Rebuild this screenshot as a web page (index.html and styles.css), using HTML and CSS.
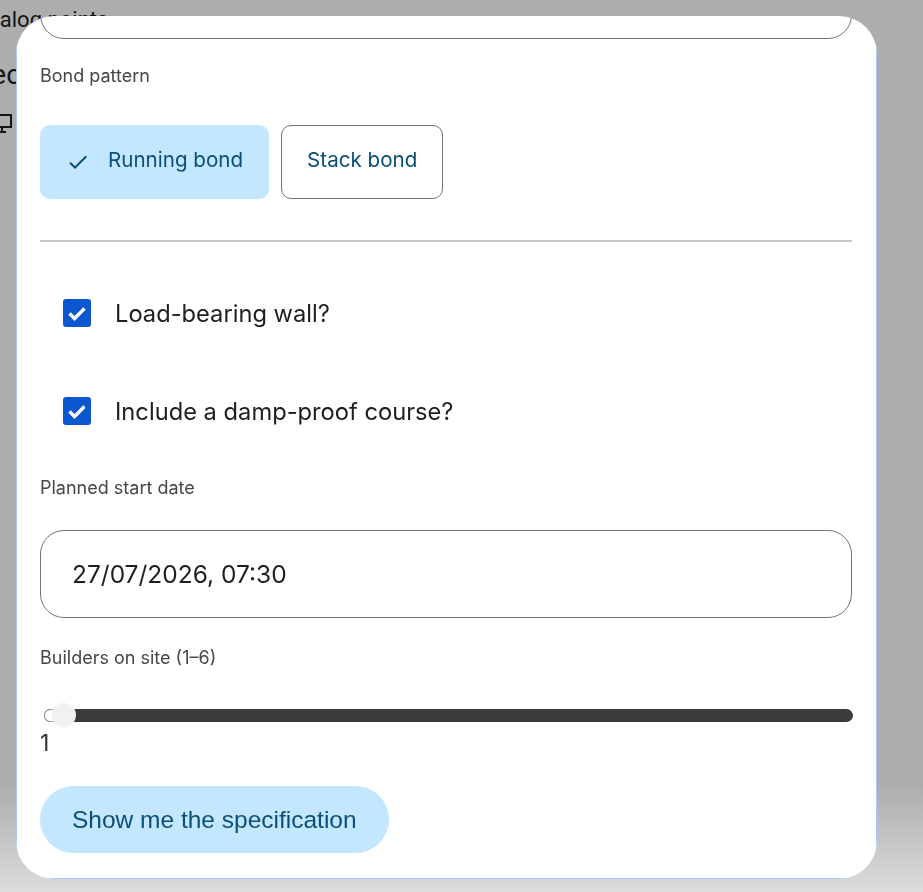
FILE: index.html
```html
<!DOCTYPE html>
<html lang="en">
<head>
<meta charset="utf-8">
<title>Wall specification</title>
<link rel="stylesheet" href="styles.css">
</head>
<body>
  <main class="page" aria-hidden="true">
    <p class="page-title">Dialog points</p>
    <h1 class="page-heading">Select</h1>
    <svg class="page-icon" width="24" height="24" viewBox="0 0 24 24">
      <path d="M3 4h18v12H3z M8 21h8 M12 16v5" fill="none" stroke="currentColor" stroke-width="2"/>
    </svg>
  </main>

  <div class="dialog" role="dialog" aria-label="Wall specification">
    <form class="sheet">
      <div class="field field-top"></div>

      <div class="label label-bond">Bond pattern</div>
      <div class="chips">
        <button type="button" class="chip chip-on">
          <svg class="chip-check" width="24" height="24" viewBox="0 0 24 24"><path d="M9 16.17 4.83 12l-1.42 1.41L9 19 21 7l-1.41-1.41z"/></svg>
          Running bond
        </button>
        <button type="button" class="chip">Stack bond</button>
      </div>

      <div class="rule"></div>

      <label class="check">
        <span class="box"><svg width="28" height="28" viewBox="0 0 28 28"><path d="M6.5 14.5l5 5L21.5 9.5" fill="none" stroke="#fff" stroke-width="3.4"/></svg></span>
        Load-bearing wall?
      </label>
      <label class="check check-next">
        <span class="box"><svg width="28" height="28" viewBox="0 0 28 28"><path d="M6.5 14.5l5 5L21.5 9.5" fill="none" stroke="#fff" stroke-width="3.4"/></svg></span>
        Include a damp-proof course?
      </label>

      <div class="label label-date">Planned start date</div>
      <div class="field field-date">27/07/2026, 07:30</div>

      <div class="label label-crew">Builders on site (1–6)</div>
      <div class="slider" role="slider" aria-valuemin="1" aria-valuemax="6" aria-valuenow="1">
        <div class="track"><span class="thumb"></span></div>
      </div>
      <div class="slider-value">1</div>

      <button type="button" class="submit">Show me the specification</button>
    </form>
  </div>
</body>
</html>
```

FILE: styles.css
```css
html, body {
  margin: 0;
  height: 100%;
}

body {
  overflow: hidden;
  background: linear-gradient(to bottom, #adadad 0, #adadad 785px, #dcdcdc 892px);
  font-family: Inter, "Noto Sans", sans-serif;
}

/* page underneath the modal, scrolled a little to the right */
.page {
  margin-left: -20px;
  padding-top: 6px;
  color: #141414;
  font-family: Roboto, "Liberation Sans", sans-serif;
}

.page-title {
  margin: 0;
  font-size: 22px;
  line-height: 28px;
  white-space: nowrap;
}

.page-heading {
  margin: 23px 0 0 -27px;
  font-size: 28px;
  font-weight: 400;
  line-height: 36px;
  white-space: nowrap;
}

.page-icon {
  display: block;
  margin: 18px 0 0 10px;
}

/* modal */
.dialog {
  position: fixed;
  left: 16px;
  top: 16px;
  width: 861px;
  height: 863px;
  border-radius: 38px;
  overflow: hidden;
  background: #fff;
}

.sheet {
  box-sizing: border-box;
  height: 100%;
  margin: 0;
  border: 1px solid #a8c7fa;
  border-top: 0;
  padding: 0 24px 0 23px;
  display: flex;
  flex-direction: column;
}

.field {
  box-sizing: border-box;
  height: 88px;
  flex: none;
  border: 1px solid #747775;
  border-radius: 24px;
  display: flex;
  align-items: center;
  padding-left: 31px;
  font-size: 24.5px;
  color: #1f1f1f;
}

.field-top { margin-top: -65px; }

.label {
  font-size: 18px;
  line-height: 24px;
  color: #444746;
}

.label-bond { margin-top: 25px; }
.label-date { margin-top: 41px; }
.label-crew { margin-top: 28px; }
.field-date { margin-top: 30px; }

.chips {
  display: flex;
  gap: 12px;
  margin-top: 37px;
}

.chip {
  box-sizing: border-box;
  height: 74px;
  border: 1px solid #747775;
  border-radius: 10px;
  padding: 0 25px 5px;
  background: #fff;
  display: flex;
  align-items: center;
  gap: 18px;
  font-family: Inter, "Noto Sans", sans-serif;
  font-size: 20.6px;
  color: #0b4f78;
}

.chip-on {
  background: #c2e7ff;
  border-color: #c2e7ff;
}

.chip-check {
  fill: #0b4f78;
  margin-top: 5px;
}

.rule {
  margin-top: 41px;
  height: 2px;
  background: #c6c6c6;
}

.check {
  margin-top: 47px;
  height: 48px;
  display: flex;
  align-items: center;
  gap: 24px;
  padding-left: 23px;
  font-size: 23.7px;
  color: #1f1f1f;
}

.check-next { margin-top: 50px; }

.box {
  width: 28px;
  height: 28px;
  border-radius: 3px;
  background: #0b57d0;
  display: flex;
}

.slider {
  margin-top: 33px;
  height: 24px;
  display: flex;
  align-items: center;
}

.track {
  position: relative;
  flex: 1;
  height: 13px;
  margin: 0 -1px 0 4px;
  border-radius: 6.5px;
  background: #3b3b3b;
}

.track::before {
  content: "";
  display: block;
  box-sizing: border-box;
  width: 20px;
  height: 100%;
  border: 1px solid #9aa0a6;
  border-right: 0;
  border-radius: 6.5px 0 0 6.5px;
  background: #fff;
}

.thumb {
  position: absolute;
  left: 8px;
  top: 50%;
  width: 24px;
  height: 24px;
  margin-top: -12px;
  border-radius: 50%;
  background: #f0f2f2;
}

.slider-value {
  margin-top: 4px;
  font-size: 23px;
  line-height: 24px;
  color: #333;
}

.submit {
  align-self: flex-start;
  margin-top: 31px;
  height: 67px;
  padding: 0 32px;
  border: 0;
  border-radius: 34px;
  background: #c2e7ff;
  font-family: "Liberation Sans", Arial, sans-serif;
  font-size: 24.5px;
  color: #0b4f78;
}
```
